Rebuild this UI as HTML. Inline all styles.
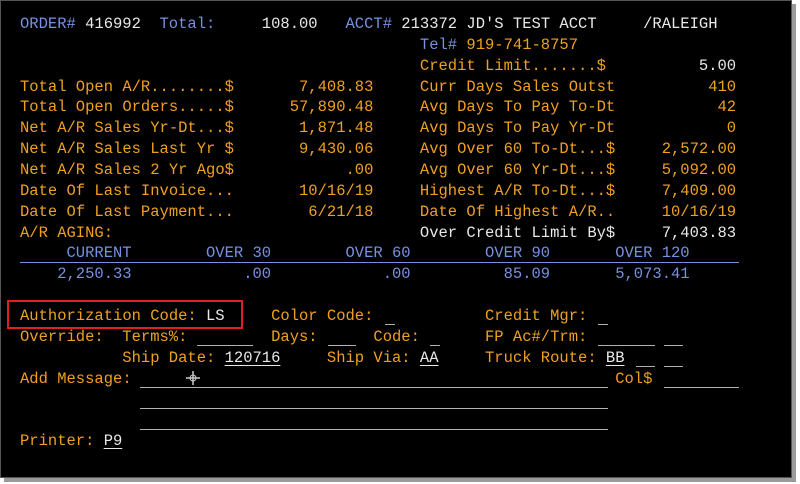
<!DOCTYPE html>
<html><head><style>
html,body{margin:0;padding:0;background:#fff;}
#wrap{position:relative;width:800px;height:484px;background:#fff;overflow:hidden;}
#shadow{position:absolute;left:4px;top:4px;width:792px;height:478px;background:#9a9a9a;}
#scr{position:absolute;left:0;top:0;width:792px;height:478px;background:#000;border:1px solid #555;box-sizing:border-box;}
.t{position:absolute;font-family:"Liberation Mono",monospace;font-size:15.5px;line-height:18px;white-space:pre;transform:translateY(-7px);}
.o{color:#f0a020}.b{color:#7890e0}.w{color:#e8e8e8}
.u{text-decoration:underline;text-underline-offset:3px}
.ln{position:absolute;height:1px;background:#b0b0b0}
</style></head><body><div id="wrap"><div id="shadow"></div><div id="scr"></div>
<div id="c"></div>
<div class="ln" style="left:20px;top:262px;width:719px;background:#7890e0"></div>
<div style="position:absolute;left:7px;top:300px;width:232px;height:25px;border:2px solid #e02020"></div>
<div class="ln" style="left:140px;top:387px;width:468px"></div>
<div class="ln" style="left:140px;top:408px;width:468px"></div>
<div class="ln" style="left:140px;top:429px;width:468px"></div>
<div class="ln" style="left:664px;top:387px;width:75px"></div>
<div class="ln" style="left:197px;top:345px;width:56px"></div>
<div class="ln" style="left:328px;top:345px;width:28px"></div>
<div class="ln" style="left:430px;top:345px;width:10px"></div>
<div class="ln" style="left:385px;top:324px;width:10px"></div>
<div class="ln" style="left:598px;top:324px;width:10px"></div>
<div class="ln" style="left:598px;top:345px;width:57px"></div>
<div class="ln" style="left:664px;top:345px;width:19px"></div>
<div class="ln" style="left:636px;top:366px;width:19px"></div>
<div class="ln" style="left:664px;top:366px;width:19px"></div>
<svg style="position:absolute;left:186px;top:371px" width="14" height="14"><path d="M7 0V14M0 7H14" stroke="#ccc" stroke-width="1.5"/><circle cx="7" cy="7" r="3" fill="none" stroke="#ccc"/></svg>
</div>
<script>
var d=[
[1,0,'b','ORDER#'],[1,7,'w','416992'],[1,15,'b','Total:'],[1,26,'w','108.00'],[1,35,'b','ACCT#'],[1,41,'w',"213372 JD'S TEST ACCT"],[1,67,'w','/RALEIGH'],
[2,43,'b','Tel#'],[2,48,'o','919-741-8757'],
[3,43,'o','Credit Limit.......$'],[3,73,'w','5.00'],
[4,0,'o','Total Open A/R........$'],[4,30,'o','7,408.83'],[4,43,'o','Curr Days Sales Outst'],[4,74,'o','410'],
[5,0,'o','Total Open Orders.....$'],[5,29,'o','57,890.48'],[5,43,'o','Avg Days To Pay To-Dt'],[5,75,'o','42'],
[6,0,'o','Net A/R Sales Yr-Dt...$'],[6,30,'o','1,871.48'],[6,43,'o','Avg Days To Pay Yr-Dt'],[6,76,'o','0'],
[7,0,'o','Net A/R Sales Last Yr $'],[7,30,'o','9,430.06'],[7,43,'o','Avg Over 60 To-Dt...$'],[7,69,'o','2,572.00'],
[8,0,'o','Net A/R Sales 2 Yr Ago$'],[8,35,'o','.00'],[8,43,'o','Avg Over 60 Yr-Dt...$'],[8,69,'o','5,092.00'],
[9,0,'o','Date Of Last Invoice...'],[9,30,'o','10/16/19'],[9,43,'o','Highest A/R To-Dt...$'],[9,69,'o','7,409.00'],
[10,0,'o','Date Of Last Payment...'],[10,31,'o','6/21/18'],[10,43,'o','Date Of Highest A/R..'],[10,69,'o','10/16/19'],
[11,0,'o','A/R AGING:'],[11,43,'w','Over Credit Limit By$'],[11,69,'w','7,403.83'],
[12,5,'b','CURRENT'],[12,20,'b','OVER 30'],[12,35,'b','OVER 60'],[12,50,'b','OVER 90'],[12,64,'b','OVER 120'],
[13,4,'b','2,250.33'],[13,24,'b','.00'],[13,39,'b','.00'],[13,52,'b','85.09'],[13,64,'b','5,073.41'],
[15,0,'o','Authorization Code:'],[15,20,'w','LS'],[15,27,'o','Color Code:'],[15,50,'o','Credit Mgr:'],
[16,0,'o','Override:'],[16,11,'o','Terms%:'],[16,27,'o','Days:'],[16,38,'o','Code:'],[16,50,'o','FP Ac#/Trm:'],
[17,11,'o','Ship Date:'],[17,22,'w u','120716'],[17,33,'o','Ship Via:'],[17,43,'w u','AA'],[17,50,'o','Truck Route:'],[17,63,'w u','BB'],
[18,0,'o','Add Message:'],[18,64,'o','Col$'],
[21,0,'o','Printer:'],[21,9,'w u','P9']];
var h='';d.forEach(function(a){h+='<span class="t '+a[2]+'" style="left:'+(20+a[1]*9.3).toFixed(1)+'px;top:'+(22+(a[0]-1)*20.85).toFixed(1)+'px">'+a[3]+'</span>';});
document.getElementById('c').innerHTML=h;
</script>
</body></html>
